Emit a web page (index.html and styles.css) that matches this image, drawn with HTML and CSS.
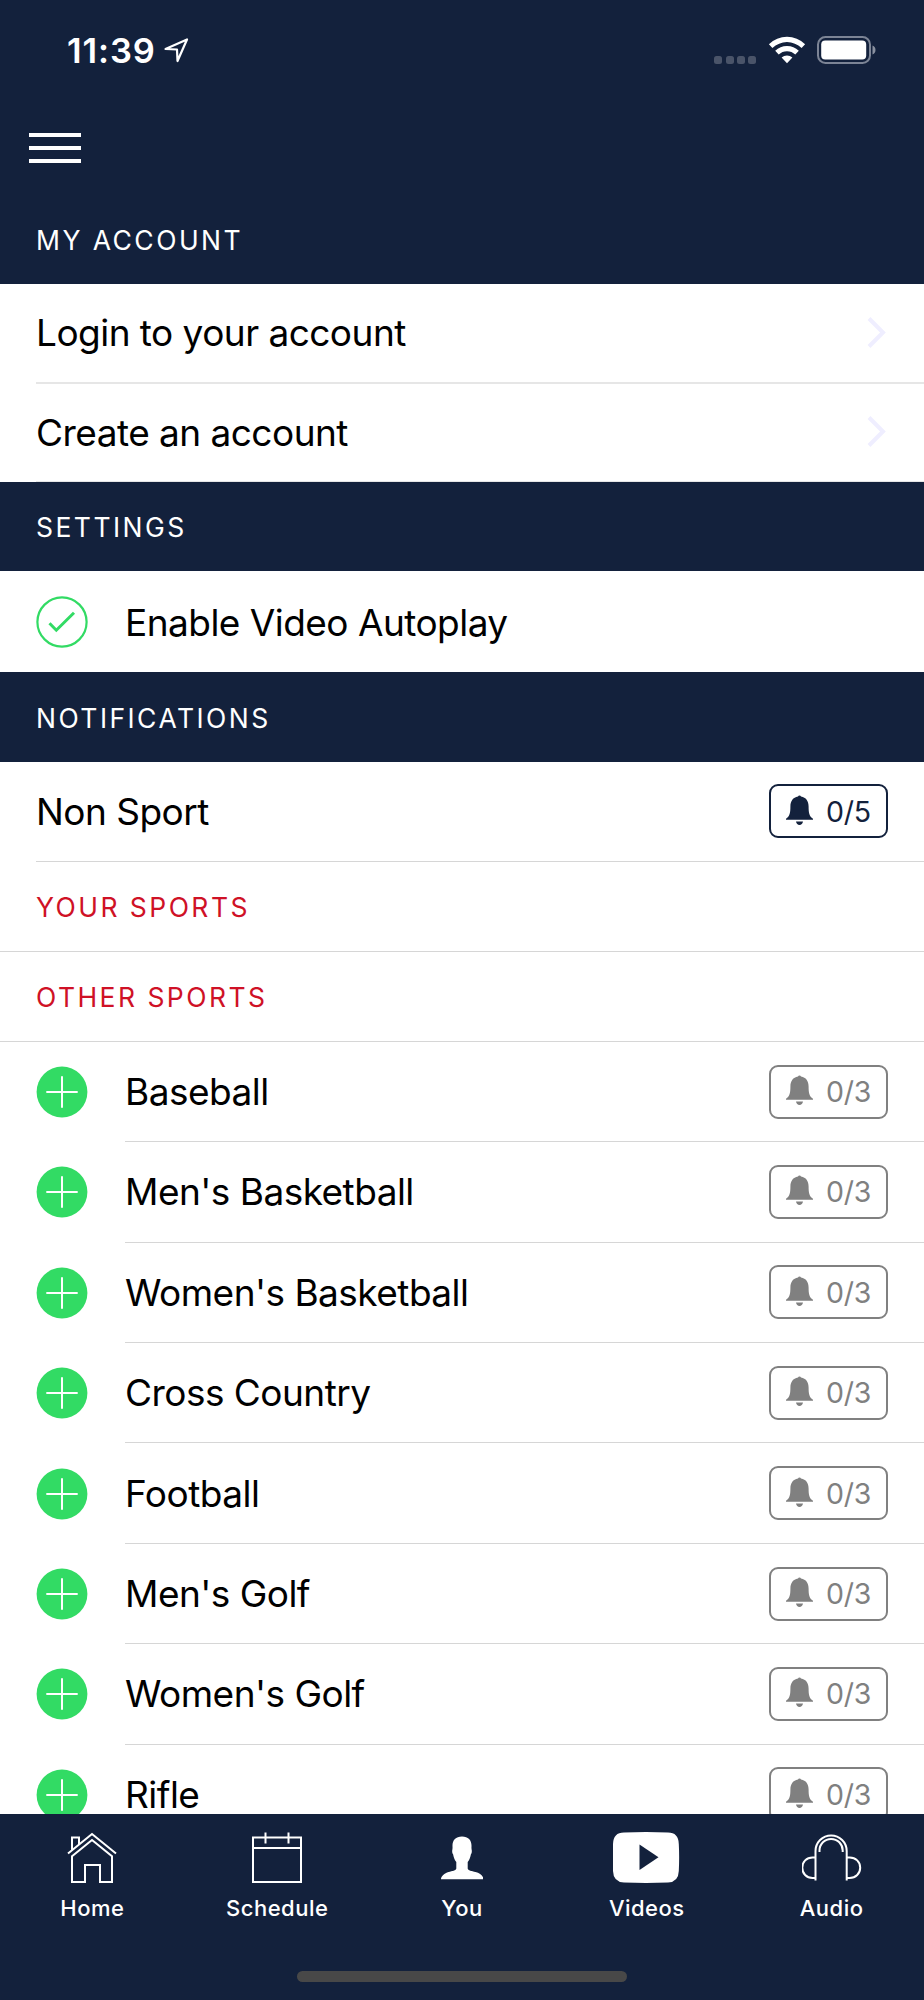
FILE: index.html
```html
<!DOCTYPE html>
<html lang="en">
<head>
<meta charset="utf-8">
<title>Settings</title>
<link rel="stylesheet" href="styles.css">
</head>
<body>
<!-- shared icons -->
<svg class="defs" width="0" height="0">
	<symbol id="bell" viewBox="0 0 27 30"><path d="M12 1.600a1.600 1.600 0 0 1 3 0c5 .8 7.600 4.600 7.600 9.900 0 6.500.6 9.600 4.400 12.300v1H0v-1c3.800-2.700 4.400-5.800 4.400-12.300C4.400 6.200 7 2.400 12 1.600zM10 26.500h7c-.4 2.200-1.700 3.500-3.500 3.500s-3.100-1.300-3.500-3.500z"/></symbol>
	<symbol id="plus" viewBox="0 0 52 52"><circle cx="26" cy="26" r="25.400" fill="#32db64"/><path d="M10.300 26h31.400M26 10.300v31.400" stroke="#fff" stroke-width="2"/></symbol>
	<symbol id="arrow" viewBox="0 0 20 34"><path d="M2 2.500L16 16.500 2 30.500" fill="none" stroke="#efeeff" stroke-width="4"/></symbol>
</svg>

<div class="header">
	<div class="status">
		<span class="time">11:39</span>
		<svg class="location" width="25" height="25" viewBox="0 0 25 25"><path d="M1.500 11L23 1.500 13.500 23 13 11.500z" fill="none" stroke="#fff" stroke-width="2.200" stroke-linejoin="round"/></svg>
		<span class="dots"><i></i><i></i><i></i><i></i></span>
		<svg class="wifi" width="38" height="28" viewBox="0 0 38 28">
			<path d="M.9 8.200a26 26 0 0 1 36.200 0l-3.500 3.800a21 21 0 0 0-29.200 0z" fill="#fff"/>
			<path d="M7.200 14.800a17 17 0 0 1 23.600 0l-3.500 3.700a12 12 0 0 0-16.600 0z" fill="#fff"/>
			<path d="M13.600 21.500a8 8 0 0 1 10.800 0L19 27.200z" fill="#fff"/>
		</svg>
		<svg class="battery" width="60" height="28" viewBox="0 0 60 28">
			<rect x="1" y="1" width="52" height="26" rx="7.500" fill="none" stroke="#7c8495" stroke-width="2"/>
			<rect x="4.200" y="4.500" width="45" height="19" rx="4" fill="#fff"/>
			<path d="M55.500 9.500c4 1.500 4 7.500 0 9z" fill="#8a91a0"/>
		</svg>
	</div>
	<div class="menu"><i></i><i></i><i></i></div>
</div>

<div class="content">
	<div class="title">MY ACCOUNT</div>
	<div class="row link"><span>Login to your account</span><svg class="arrow"><use href="#arrow"/></svg></div>
	<div class="row link last"><span>Create an account</span><svg class="arrow"><use href="#arrow"/></svg></div>

	<div class="title">SETTINGS</div>
	<div class="item autoplay">
		<svg class="icon" viewBox="0 0 52 52"><circle cx="26" cy="26" r="24.600" fill="none" stroke="#32db64" stroke-width="2.200"/><path d="M13.500 27.200l6.800 7L38 16.700" fill="none" stroke="#32db64" stroke-width="3"/></svg>
		<div class="label"><span>Enable Video Autoplay</span></div>
	</div>

	<div class="title">NOTIFICATIONS</div>
	<div class="row nonsport"><span>Non Sport</span><div class="badge on"><svg><use href="#bell"/></svg>0/5</div></div>
	<div class="title red">YOUR SPORTS</div>
	<div class="title red">OTHER SPORTS</div>

	<div class="item"><svg class="icon"><use href="#plus"/></svg><div class="label"><span>Baseball</span><div class="badge"><svg><use href="#bell"/></svg>0/3</div></div></div>
	<div class="item"><svg class="icon"><use href="#plus"/></svg><div class="label"><span>Men's Basketball</span><div class="badge"><svg><use href="#bell"/></svg>0/3</div></div></div>
	<div class="item"><svg class="icon"><use href="#plus"/></svg><div class="label"><span>Women's Basketball</span><div class="badge"><svg><use href="#bell"/></svg>0/3</div></div></div>
	<div class="item"><svg class="icon"><use href="#plus"/></svg><div class="label"><span>Cross Country</span><div class="badge"><svg><use href="#bell"/></svg>0/3</div></div></div>
	<div class="item"><svg class="icon"><use href="#plus"/></svg><div class="label"><span>Football</span><div class="badge"><svg><use href="#bell"/></svg>0/3</div></div></div>
	<div class="item"><svg class="icon"><use href="#plus"/></svg><div class="label"><span>Men's Golf</span><div class="badge"><svg><use href="#bell"/></svg>0/3</div></div></div>
	<div class="item"><svg class="icon"><use href="#plus"/></svg><div class="label"><span>Women's Golf</span><div class="badge"><svg><use href="#bell"/></svg>0/3</div></div></div>
	<div class="item"><svg class="icon"><use href="#plus"/></svg><div class="label"><span>Rifle</span><div class="badge"><svg><use href="#bell"/></svg>0/3</div></div></div>
</div>

<div class="footer">
	<div class="tabs">
		<div class="tab">
			<svg width="52" height="54" viewBox="0 0 52 54" fill="none" stroke="#fff" stroke-width="2">
				<path d="M2 22.500L26 3l24 19.500M6 18.500V6.500h7v7"/>
				<path d="M6 25.200L26 9l20 16.200V51H34V34H19v17H6z"/>
			</svg>
			<span>Home</span>
		</div>
		<div class="tab">
			<svg width="52" height="54" viewBox="0 0 52 54" fill="none" stroke="#fff" stroke-width="2">
				<path d="M2 6.500h48V51H2zM2 17h48M14.500 1.500v11M37.500 1.500v11"/>
			</svg>
			<span>Schedule</span>
		</div>
		<div class="tab">
			<svg width="42" height="54" viewBox="0 0 42 54" fill="#fff">
				<path d="M21 5.500c6.500 0 9.800 4 9.500 10-.1 1.500 0 3 .3 4 .1 2-.2 3-.8 3.500-.8 4-2 6.500-3.300 8v6.500c.3 2.200 4 2.500 7.800 3.500 4.500 1.200 8 4 8 7.300H0c0-3.300 3.500-6 7.500-7.300 3.800-1 7.500-1.300 7.800-3.500V31c-1.300-1.500-2.500-4-3.300-8-.6-.5-.9-1.500-.8-3.500.3-1 .4-2.500.3-4-.3-6 3-10 9.500-10z"/>
			</svg>
			<span>You</span>
		</div>
		<div class="tab">
			<svg width="68" height="54" viewBox="1 0 68 54">
				<path d="M12 1.500Q34 .6 56 1.500 66.500 1.500 66.800 13q.7 13 0 27-.3 11-10.800 11.500-22 .9-44 0Q1.300 51 1 40q-.7-14 0-27Q1.300 1.500 12 1.500z" fill="#fff"/>
				<path d="M27.500 13.500v25.500l19-12.700z" fill="#13213c"/>
			</svg>
			<span>Videos</span>
		</div>
		<div class="tab">
			<svg width="60" height="54" viewBox="1 0 60 54" fill="none" stroke="#fff" stroke-width="2">
				<path d="M14.500 49.500V20a15.600 15.600 0 0 1 31.200 0v29.500"/>
				<path d="M18.500 21v-1.500a11.600 11.600 0 0 1 23.200 0V21"/>
				<path d="M14.500 26.500h-3c-6 0-10.200 4.300-10.200 10.200S5.500 47 11.500 47h3M45.700 26.500h3c6 0 10.500 4.300 10.500 10.200S54.700 47 48.700 47h-3"/>
			</svg>
			<span>Audio</span>
		</div>
	</div>
	<div class="homebar"></div>
</div>
</body>
</html>
```
FILE: styles.css
```css
*{margin:0;padding:0;box-sizing:border-box;}
body{width:924px;height:2000px;overflow:hidden;display:flex;flex-direction:column;background:#fff;font-family:Inter,"Liberation Sans",sans-serif;color:#000;}
svg{display:block;flex:none;}
i{display:block;}
.defs{position:absolute;}

/* header */
.header{height:194px;flex:none;background:#13213c;color:#fff;}
.status{height:100px;display:flex;align-items:flex-start;padding:36px 47px 0 67px;}
.time{width:89px;font-size:34.500px;line-height:30px;font-weight:600;letter-spacing:.9px;white-space:nowrap;}
.location{margin:2px 0 0 8px;}
.dots{display:flex;gap:3.200px;margin:20px 12px 0 auto;}
.dots i{width:8px;height:8px;border-radius:2.500px;background:#4a5469;}
.battery{margin-left:11px;}
.menu{display:flex;flex-direction:column;gap:9px;padding:33px 0 0 29px;}
.menu i{width:52px;height:4px;background:#fff;}

/* list */
.content{flex:1;min-height:0;overflow:hidden;}
.title{height:89.500px;display:flex;align-items:center;padding:2px 0 0 36px;background:#13213c;color:#fff;font-size:26.500px;letter-spacing:2.450px;}
.red{height:90.200px;background:#fff;color:#cf1126;border-bottom:1px solid #d6d6d6;}
.row{height:100px;display:flex;align-items:center;justify-content:space-between;margin-left:36px;padding-right:36px;border-bottom:1px solid #d6d6d6;font-size:37px;letter-spacing:-.530px;}
.link{padding-right:37px;border-bottom:2px solid #e6e6e6;}
.last{height:98px;border-bottom-width:1px;}
.arrow{width:20px;height:34px;}
.item{height:100.400px;display:flex;align-items:center;padding-left:36px;}
.icon{width:52px;height:52px;margin-right:37px;}
.label{flex:1;height:100%;display:flex;align-items:center;justify-content:space-between;padding-right:36px;border-bottom:1px solid #d6d6d6;font-size:37px;letter-spacing:-.530px;}
.autoplay{height:101px;padding-top:1px;}
.autoplay .label{border:0;}
.badge{width:119px;height:54px;display:flex;align-items:center;padding-left:15px;border:2px solid #808080;border-radius:9px;color:#808080;font-size:28.500px;letter-spacing:-.2px;}
.badge svg{width:27px;height:30px;margin:-3px 13px 0 0;fill:#808080;}
.on{border-color:#13213c;color:#13213c;}
.on svg{fill:#13213c;}

/* tab bar */
.footer{height:186px;flex:none;background:#13213c;color:#fff;}
.tabs{display:flex;padding-top:17px;height:162px;}
.tab{flex:1;display:flex;flex-direction:column;align-items:center;}
.tab span{margin-top:10px;font-size:22px;line-height:27px;font-weight:500;letter-spacing:.5px;}
.homebar{width:330px;height:11px;margin:-5px auto 0;border-radius:6px;background:#484848;}
```
